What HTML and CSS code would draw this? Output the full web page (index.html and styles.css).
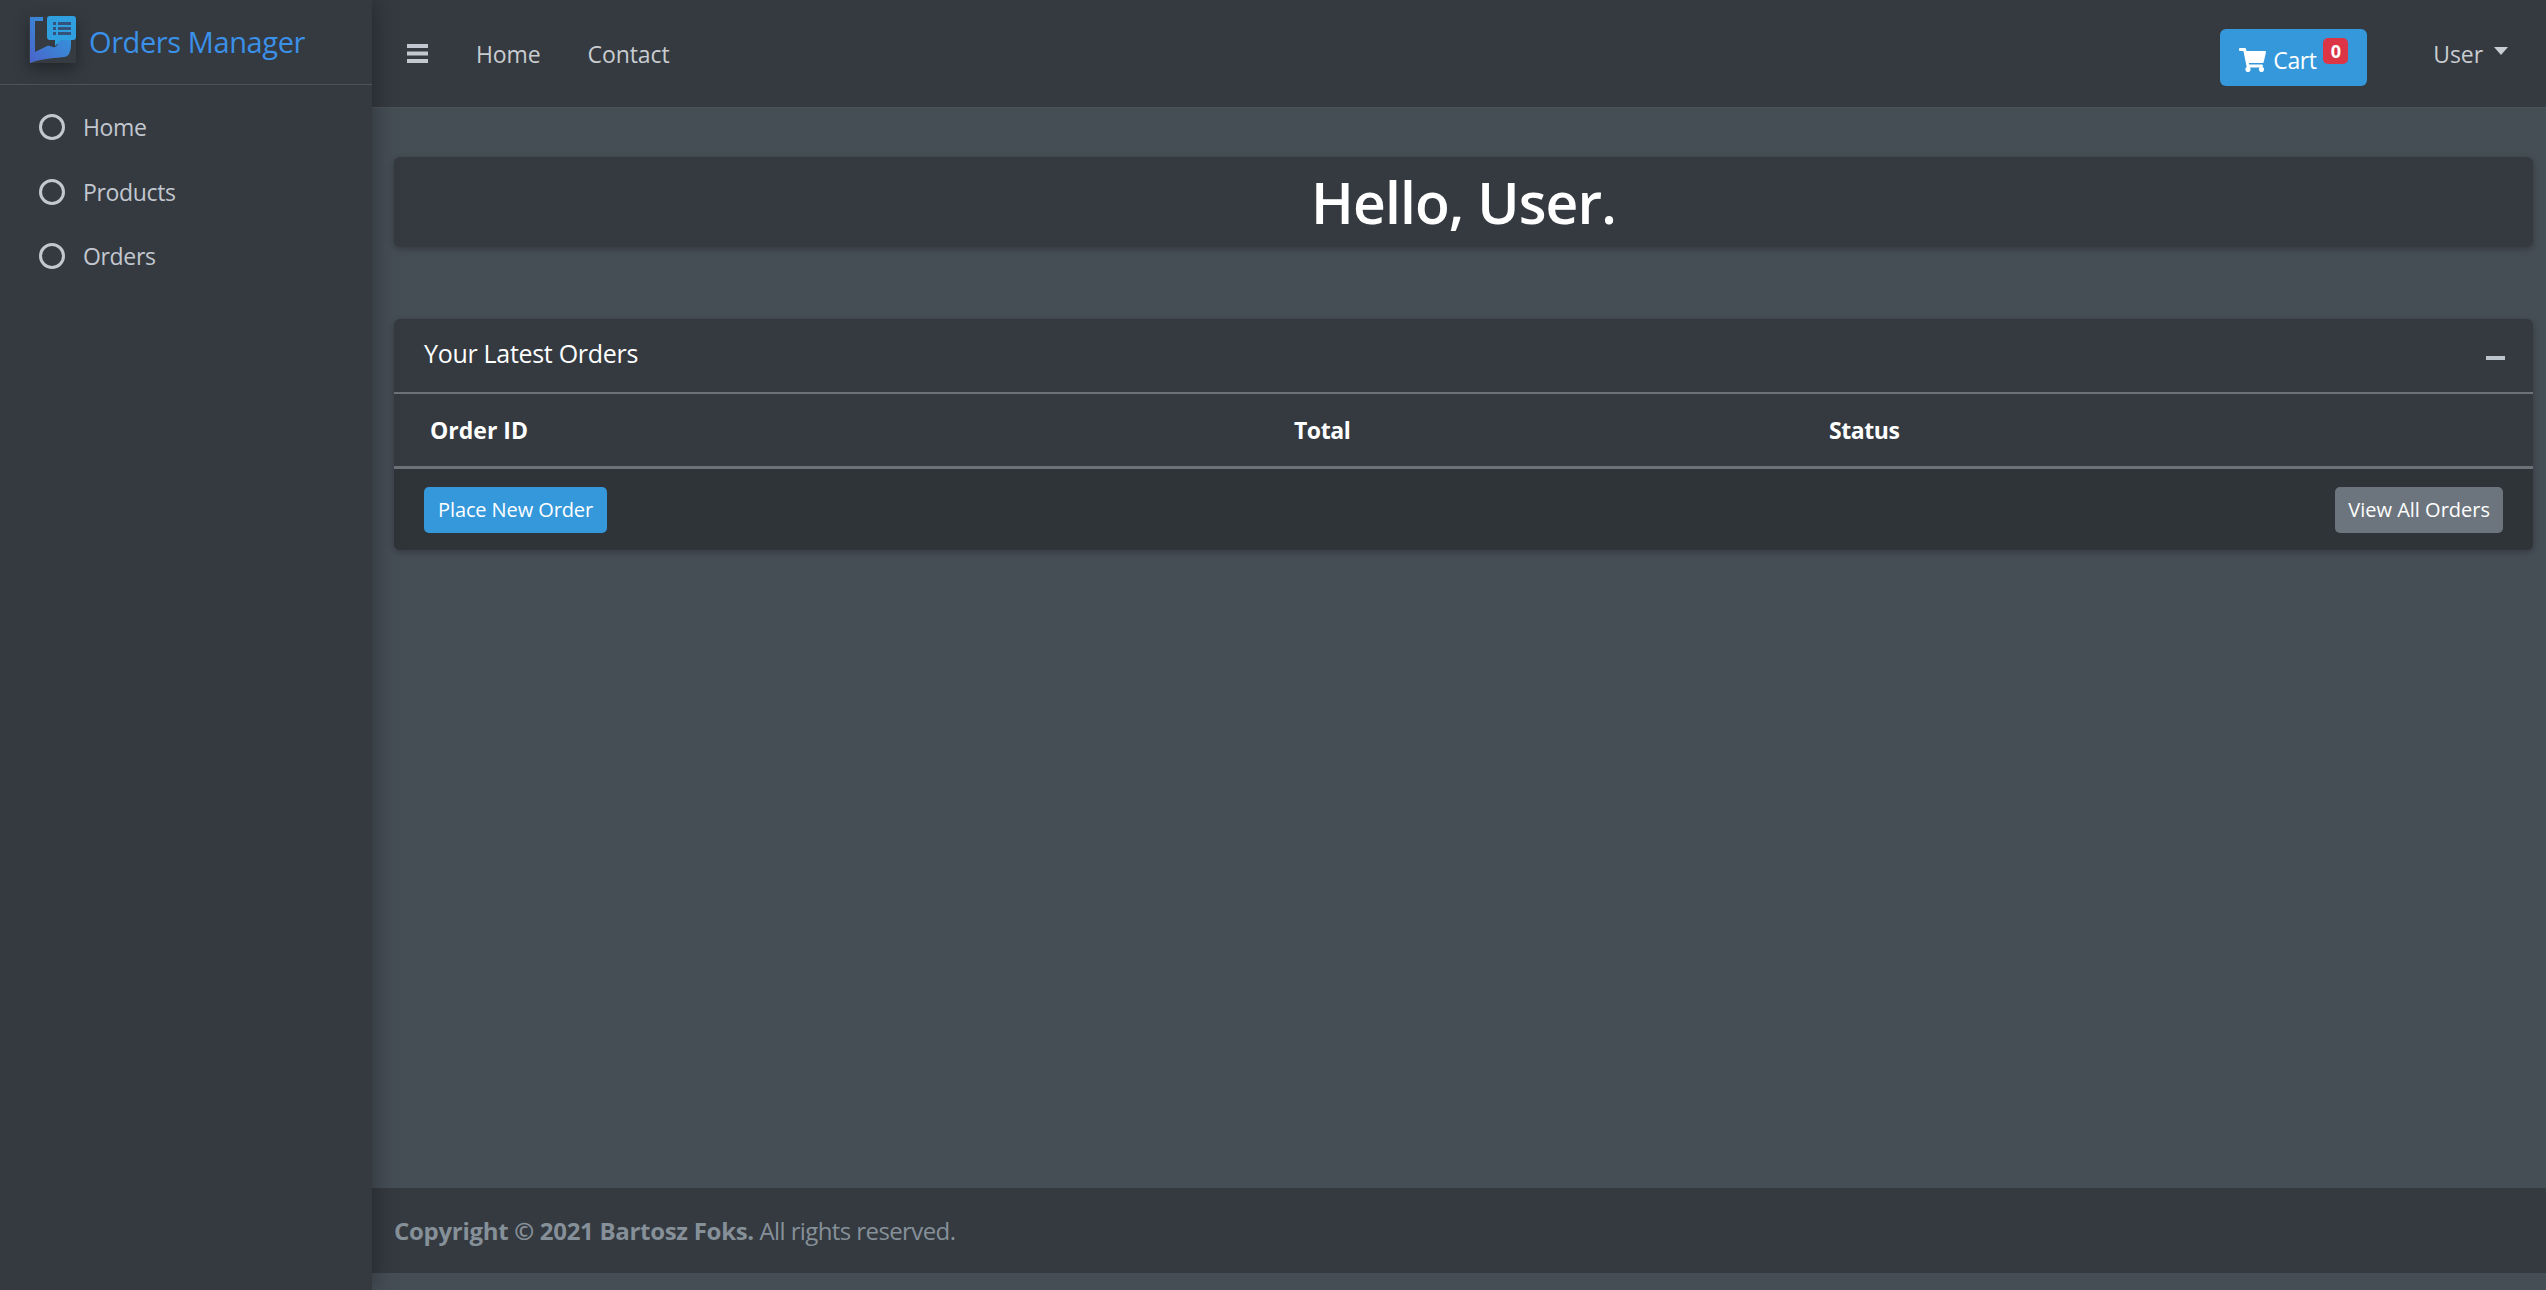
FILE: index.html
```html
<!DOCTYPE html>
<html lang="en">
<head>
    <meta charset="UTF-8">
    <meta name="viewport" content="width=device-width, initial-scale=1.0">
    <title>Orders Manager</title>
    <link rel="stylesheet" href="styles.css">
</head>
<body>
    <div class="wrapper">
        <aside class="sidebar">
            <a class="brand" href="#">
                <span class="brand-logo">
                    <svg width="47" height="47" viewBox="0 0 47 47">
                        <defs>
                            <linearGradient id="logoBlue" x1="0" y1="1" x2="1" y2="0">
                                <stop offset="0" stop-color="#4a63c9"/>
                                <stop offset="1" stop-color="#2f9fe0"/>
                            </linearGradient>
                        </defs>
                        <path d="M1 1h13v4H6v31l12-6c4-1 5 2 8 1 3-1 3-5 3-7h13v4c0 9-3 13-7 13-7 1-20 1-34 6H1z" fill="url(#logoBlue)"/>
                        <path d="M21 0h23a3 3 0 0 1 3 3v18a3 3 0 0 1-3 3H32l-6 6v-6h-5a3 3 0 0 1-3-3V3a3 3 0 0 1 3-3z" fill="#2f9fe0"/>
                        <path d="M24 6h3v3h-3zM29 6h13v3H29zM24 11h3v3h-3zM29 11h13v3H29zM24 16h3v3h-3zM29 16h13v3H29z" fill="#35527a"/>
                    </svg>
                </span>
                <span class="brand-text">Orders Manager</span>
            </a>
            <nav class="side-nav">
                <a href="#"><span class="ring"></span>Home</a>
                <a href="#"><span class="ring"></span>Products</a>
                <a href="#"><span class="ring"></span>Orders</a>
            </nav>
        </aside>

        <div class="main">
            <header class="topbar">
                <a class="bars" href="#">
                    <svg width="21" height="19" viewBox="0 0 21 19"><path d="M0 0h21v4H0zM0 7.5h21v4H0zM0 15h21v4H0z" fill="#c2c7d0"/></svg>
                </a>
                <a class="top-link" href="#">Home</a>
                <a class="top-link" href="#">Contact</a>
                <a class="cart" href="#">
                    <svg width="27" height="24" viewBox="0 0 576 512"><path fill="#fff" d="M528.12 301.319l47.273-208C578.806 78.301 567.391 64 551.99 64H159.208l-9.166-44.81C147.758 8.021 137.93 0 126.529 0H24C10.745 0 0 10.745 0 24v16c0 13.255 10.745 24 24 24h69.883l70.248 343.435C147.325 417.1 136 435.222 136 456c0 30.928 25.072 56 56 56s56-25.072 56-56c0-15.674-6.447-29.835-16.824-40h209.647C430.447 426.165 424 440.326 424 456c0 30.928 25.072 56 56 56s56-25.072 56-56c0-22.172-12.888-41.332-31.579-50.405l5.517-24.276c3.413-15.018-8.002-29.319-23.403-29.319H218.117l-6.545-32h293.145c11.206 0 20.92-7.754 23.403-18.681z"/></svg>
                    <span class="cart-text">Cart</span>
                    <span class="badge">0</span>
                </a>
                <a class="user" href="#">User<span class="caret"></span></a>
            </header>

            <main class="content">
                <section class="card hello">
                    <h1>Hello, User.</h1>
                </section>

                <section class="card orders">
                    <div class="card-header">
                        <h3>Your Latest Orders</h3>
                        <span class="minus"></span>
                    </div>
                    <div class="table-head">
                        <span class="col-id">Order ID</span>
                        <span>Total</span>
                        <span>Status</span>
                    </div>
                    <div class="card-footer">
                        <a class="btn btn-blue" href="#">Place New Order</a>
                        <a class="btn btn-gray" href="#">View All Orders</a>
                    </div>
                </section>
            </main>

            <footer class="footer">
                <strong>Copyright © 2021 Bartosz Foks.</strong> All rights reserved.
            </footer>
        </div>
    </div>
</body>
</html>
```

FILE: styles.css
```css
* {
    box-sizing: border-box;
}

body {
    margin: 0;
    font-family: "Open Sans", "Noto Sans", sans-serif;
    font-size: 24px;
    background-color: #454d55;
    color: #fff;
}

a {
    text-decoration: none;
    color: inherit;
}

.wrapper {
    display: flex;
    height: 1290px;
    overflow: hidden;
}

/* sidebar */
.sidebar {
    width: 372px;
    flex-shrink: 0;
    background-color: #343a40;
    box-shadow: 0 0 24px rgba(0, 0, 0, 0.35);
    position: relative;
    z-index: 2;
}

.brand {
    display: flex;
    align-items: flex-start;
    height: 85px;
    padding: 16px 0 0 29px;
    border-bottom: 1px solid #4b545c;
}

.brand-logo {
    display: block;
    height: 47px;
    background-color: #363b41;
    box-shadow: 0 6px 14px rgba(0, 0, 0, 0.35);
}

.brand-text {
    margin: 3px 0 0 13px;
    font-size: 29px;
    line-height: 46px;
    letter-spacing: -0.4px;
    color: #3b90e8;
}

.side-nav {
    display: flex;
    flex-direction: column;
    padding-top: 10px;
}

.side-nav a {
    display: flex;
    align-items: center;
    height: 64.5px;
    padding-left: 39px;
    font-size: 23px;
    letter-spacing: -0.35px;
    color: #c2c7d0;
}

.ring {
    width: 26px;
    height: 26px;
    margin-right: 18px;
    border: 3px solid #c2c7d0;
    border-radius: 50%;
}

/* top bar */
.main {
    flex: 1;
    display: flex;
    flex-direction: column;
    min-width: 0;
    padding-bottom: 17px;
}

.topbar {
    display: flex;
    align-items: center;
    height: 108px;
    flex-shrink: 0;
    padding-left: 35px;
    background-color: #343a40;
    border-bottom: 1px solid #4b545c;
    font-size: 23px;
    letter-spacing: -0.1px;
    color: #c9ccd0;
}

.bars {
    display: flex;
    margin-right: 48px;
}

.top-link {
    margin-right: 47px;
}

.cart {
    display: flex;
    align-items: center;
    position: relative;
    width: 147px;
    height: 57px;
    margin-top: 8px;
    margin-left: auto;
    padding: 4px 0 0 19px;
    background-color: #3498db;
    border-radius: 6px;
    letter-spacing: -0.4px;
    color: #fff;
}

.cart-text {
    margin-left: 7px;
}

.badge {
    position: absolute;
    top: 9px;
    right: 19px;
    width: 25px;
    height: 26px;
    border-radius: 5px;
    background-color: #dc3545;
    font-size: 18px;
    font-weight: 700;
    line-height: 26px;
    letter-spacing: 0;
    text-align: center;
}

.user {
    display: flex;
    align-items: center;
    margin: 0 38px 0 66px;
}

.caret {
    margin-left: 11px;
    margin-top: -5px;
    border-top: 8px solid #c9ccd0;
    border-left: 7px solid transparent;
    border-right: 7px solid transparent;
}

/* content */
.content {
    flex: 1;
    padding: 49px 13px 0 22px;
}

.card {
    background-color: #343a40;
    border-radius: 6px;
    box-shadow: 0 2px 6px rgba(0, 0, 0, 0.25);
}

.hello {
    height: 90px;
    margin-bottom: 72px;
    text-align: center;
}

.hello h1 {
    margin: 0;
    font-size: 57px;
    font-weight: 600;
    line-height: 90px;
    letter-spacing: -0.9px;
}

.card-header {
    display: flex;
    align-items: center;
    justify-content: space-between;
    height: 75px;
    padding: 0 28px 5px 30px;
    border-bottom: 2px solid #6c7278;
}

.card-header h3 {
    margin: 0;
    font-size: 25px;
    font-weight: 400;
    letter-spacing: -0.3px;
}

.minus {
    width: 19px;
    height: 4px;
    margin-top: 9px;
    background-color: #bfc5cc;
}

.table-head {
    display: grid;
    grid-template-columns: 864px 535px 1fr;
    align-items: center;
    height: 75px;
    padding-left: 36px;
    border-bottom: 3px solid #6c7278;
    font-size: 23px;
    font-weight: 700;
    letter-spacing: -0.45px;
}

.col-id {
    letter-spacing: 0;
}

.card-footer {
    display: flex;
    align-items: center;
    justify-content: space-between;
    height: 81px;
    padding: 0 30px;
    background-color: #2f3438;
    border-radius: 0 0 6px 6px;
}

.btn {
    height: 46px;
    padding: 0 14px;
    border-radius: 5px;
    font-size: 20px;
    line-height: 46px;
    letter-spacing: -0.1px;
    color: #fff;
}

.btn-blue {
    background-color: #3498db;
}

.btn-gray {
    padding: 0 13px;
    background-color: #6c757d;
    letter-spacing: 0;
}

/* footer */
.footer {
    height: 85px;
    flex-shrink: 0;
    padding: 0 22px;
    background-color: #343a40;
    font-size: 24px;
    line-height: 85px;
    letter-spacing: -0.6px;
    color: #869099;
}

.footer strong {
    letter-spacing: -0.3px;
}
```
